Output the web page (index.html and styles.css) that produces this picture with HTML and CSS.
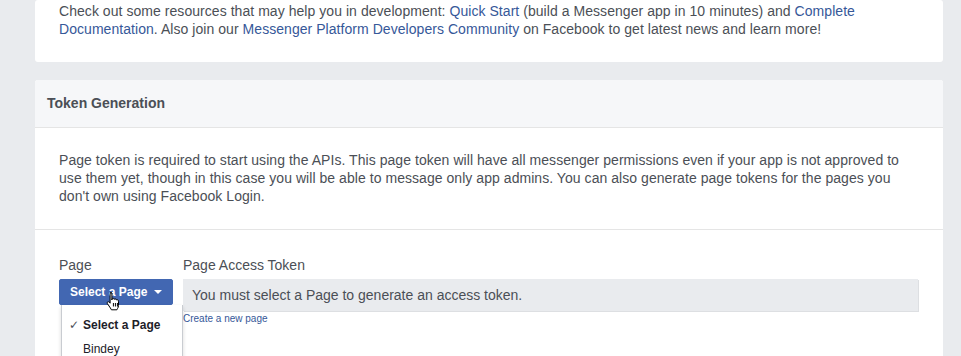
FILE: index.html
```html
<!DOCTYPE html>
<html lang="en">
<head>
  <meta charset="UTF-8" />
  <title>Messenger Settings</title>
  <link rel="stylesheet" href="styles.css">
</head>
<body>
  <div class="content">
    <div class="card intro">
      <p>
        Check out some resources that may help you in development: <a href="#">Quick Start</a> (build a Messenger app in 10 minutes) and <a href="#">Complete Documentation</a>. Also join our <a href="#">Messenger Platform Developers Community</a> on Facebook to get latest news and learn more!
      </p>
    </div>

    <div class="card">
      <div class="card-header">Token Generation</div>
      <div class="card-body">
        <p>
          Page token is required to start using the APIs. This page token will have all messenger permissions even if your app is not approved to use them yet, though in this case you will be able to message only app admins. You can also generate page tokens for the pages you don't own using Facebook Login.
        </p>
      </div>
      <div class="token-form">
        <div class="field page-field">
          <label>Page</label>
          <button class="select-btn">Select a Page <span class="caret"></span></button>
          <ul class="dropdown">
            <li class="selected"><span class="check">✓</span>Select a Page</li>
            <li>Bindey</li>
          </ul>
          <svg class="cursor" width="16" height="21" viewBox="0 0 16 21">
            <path d="M4.5 1.5c.8 0 1.4.6 1.4 1.4V9l.1-1.2c.5-.6 1.5-.6 2 0l.1.6c.5-.6 1.5-.6 2 0l.1.6c.5-.5 1.5-.5 1.9.2.3.4.4 1 .4 1.6v3.7c0 1.2-.4 2.2-1 3.1l-.6 1.2H5.4l-1-1.8-3-4.4c-.4-.7-.2-1.4.4-1.7.5-.3 1.200-.2 1.6.3l.7 1V2.9c0-.8.6-1.4 1.4-1.4z" fill="#fff" stroke="#000" stroke-width="1"/>
            <path d="M7.4 12v3.5M9.4 12v3.5M11.4 12v3.5" stroke="#000" stroke-width="1"/>
          </svg>
        </div>
        <div class="field token-field">
          <label>Page Access Token</label>
          <div class="token-input">You must select a Page to generate an access token.</div>
          <a href="#" class="small-link">Create a new page</a>
        </div>
      </div>
    </div>
  </div>
</body>
</html>
```

FILE: styles.css
```css
body {
  margin: 0;
  background: #e9ebee;
  font-family: 'Liberation Sans', Helvetica, Arial, sans-serif;
  color: #4b4f56;
  overflow: hidden;
}
a {
  color: #365899;
  text-decoration: none;
}
p {
  margin: 0;
  font-size: 14px;
  line-height: 18px;
  letter-spacing: 0.05px;
}
.content {
  margin: 0 18px 0 35px;
  display: flex;
  flex-direction: column;
  gap: 18px;
}
.card {
  background: #fff;
  border-radius: 3px;
}
.intro {
  padding: 2px 24px 24px;
}
.card-header {
  background: #f6f7f9;
  border-bottom: 1px solid #e5e5e5;
  border-radius: 3px 3px 0 0;
  height: 47px;
  line-height: 47px;
  padding: 0 12px;
  font-size: 14px;
  font-weight: bold;
}
.card-body {
  padding: 23px 24px 24px;
  border-bottom: 1px solid #e5e5e5;
}
.token-form {
  display: flex;
  padding: 26px 25px 60px 24px;
}
.field {
  display: flex;
  flex-direction: column;
  align-items: flex-start;
}
.field label {
  font-size: 14px;
  line-height: 18px;
  margin-bottom: 5px;
}
.page-field {
  position: relative;
  width: 124px;
}
.token-field {
  flex: 1;
}
.select-btn {
  background: #4267b2;
  border: 1px solid #4267b2;
  border-radius: 2px;
  color: #fff;
  font-family: inherit;
  font-size: 12px;
  font-weight: bold;
  height: 26px;
  width: 114px;
  padding: 0 0 0 10px;
  text-align: left;
}
.caret {
  display: inline-block;
  margin-left: 3px;
  border-left: 4px solid transparent;
  border-right: 4px solid transparent;
  border-top: 4px solid #fff;
  vertical-align: 2px;
}
.dropdown {
  position: absolute;
  top: 49px;
  left: 2px;
  width: 120px;
  margin: 0;
  padding: 8px 0 6px;
  list-style: none;
  background: #fff;
  border: 1px solid #c9ccd1;
  border-top: none;
  box-shadow: 0 2px 4px rgba(0, 0, 0, 0.15);
  font-size: 12px;
  z-index: 2;
}
.dropdown li {
  height: 24px;
  line-height: 24px;
  padding-left: 21px;
  color: #1d2129;
  position: relative;
}
.dropdown .selected {
  font-weight: bold;
}
.check {
  position: absolute;
  left: 7px;
  font-weight: normal;
  color: #4b4f56;
  font-family: 'DejaVu Sans', sans-serif;
  font-size: 12px;
}
.cursor {
  position: absolute;
  left: 47px;
  top: 35px;
  z-index: 3;
}
.token-input {
  align-self: stretch;
  background: #e9ebee;
  height: 32px;
  line-height: 32px;
  padding-left: 9px;
  font-size: 14px;
  box-shadow: 1px 1px 0 #dddfe2;
}
.small-link {
  font-size: 10px;
  line-height: 14px;
  margin-top: 1px;
}
```
